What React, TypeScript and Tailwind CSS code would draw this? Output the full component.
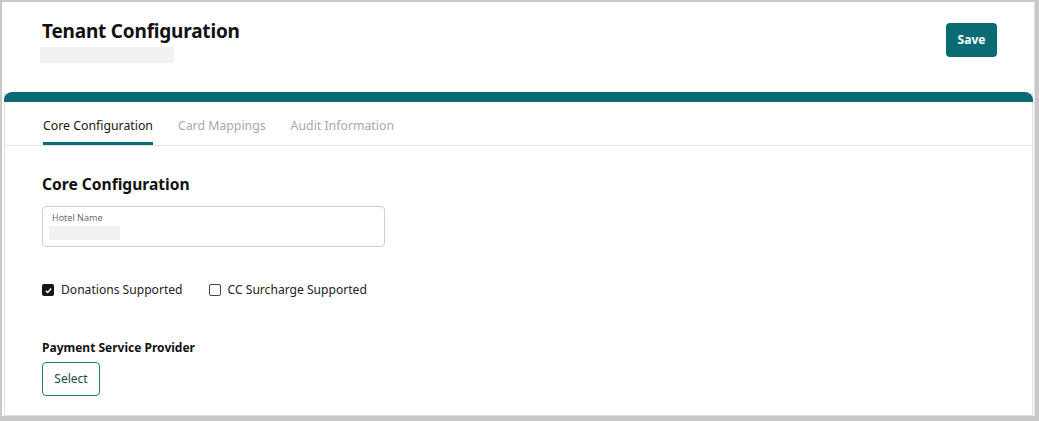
import React from "react";

export default function App() {
  const font = { fontFamily: '"Noto Sans", "Open Sans", sans-serif' };
  return (
    <div className="w-[1039px] h-[421px] bg-[#c9c9c9] pt-[2px] pl-[2px] pr-[4px] pb-[5px]" style={font}>
      <div className="h-full w-full bg-white flex flex-col pr-[1px] border-r border-[#e2e2e2]">
        <div className="flex justify-between items-start h-[90px] pl-[40px] pr-[36px]">
          <div className="pt-[16px]">
            <h1 className="text-[19px] leading-[26px] font-bold text-[#111] tracking-[-0.2px]">Tenant Configuration</h1>
            <div className="mt-[3px] -ml-[2px] w-[134px] h-[16px] bg-[#f1f1f1]" />
          </div>
          <button className="mt-[21px] w-[51px] h-[34px] rounded-[4px] bg-[#0b6b74] text-white text-[12px] font-bold">Save</button>
        </div>
        <div className="flex-1 flex flex-col ml-[2px] mr-[0px] border-x border-b border-[#e0e0e0]">
          <div className="h-[10px] bg-[#0b6b74] rounded-t-[8px] -mx-[1px]" />
          <div className="flex gap-[25px] pl-[38px] border-b border-[#e6e6e6] h-[44px] items-stretch">
            <div className="flex flex-col justify-end">
              <span className="text-[12.3px] text-[#161513] leading-[18px] pb-[7px]">Core Configuration</span>
              <div className="h-[3px] bg-[#0b6b74]" />
            </div>
            <div className="flex flex-col justify-end">
              <span className="text-[12.3px] text-[#a9a9a9] leading-[18px] pb-[10px]">Card Mappings</span>
            </div>
            <div className="flex flex-col justify-end">
              <span className="text-[12.3px] text-[#a9a9a9] leading-[18px] pb-[10px]">Audit Information</span>
            </div>
          </div>
          <div className="pl-[37px] pt-[27px]">
            <h2 className="text-[15.6px] font-bold text-[#111] leading-[22px]">Core Configuration</h2>
            <div className="mt-[11px] w-[343px] h-[41px] border border-[#cfcfcf] rounded-[4px] pl-[9px] pt-[5px] relative">
              <div className="text-[9px] leading-[12px] text-[#6b6b6b]">Hotel Name</div>
              <div className="mt-[2px] -ml-[3px] w-[71px] h-[14px] bg-[#f1f1f1]" />
            </div>
            <div className="flex items-center mt-[35px] h-[16px]">
              <div className="w-[12px] h-[12px] rounded-[2px] bg-[#161513] flex items-center justify-center">
                <svg width="9" height="9" viewBox="0 0 10 10"><path d="M2 5.2 L4.1 7.2 L8 2.8" stroke="white" strokeWidth="1.6" fill="none" /></svg>
              </div>
              <span className="ml-[7px] text-[12.1px] text-[#222]">Donations Supported</span>
              <div className="ml-[26px] w-[12px] h-[12px] rounded-[2px] border border-[#4a4458] bg-white" />
              <span className="ml-[7px] text-[12.1px] text-[#222]">CC Surcharge Supported</span>
            </div>
            <div className="mt-[42px] text-[12px] font-bold text-[#111] leading-[16px]">Payment Service Provider</div>
            <button className="mt-[6px] w-[58px] h-[34px] border border-[#1f7a82] rounded-[4px] text-[12px] text-[#1b4a52]">Select</button>
          </div>
        </div>
      </div>
    </div>
  );
}
